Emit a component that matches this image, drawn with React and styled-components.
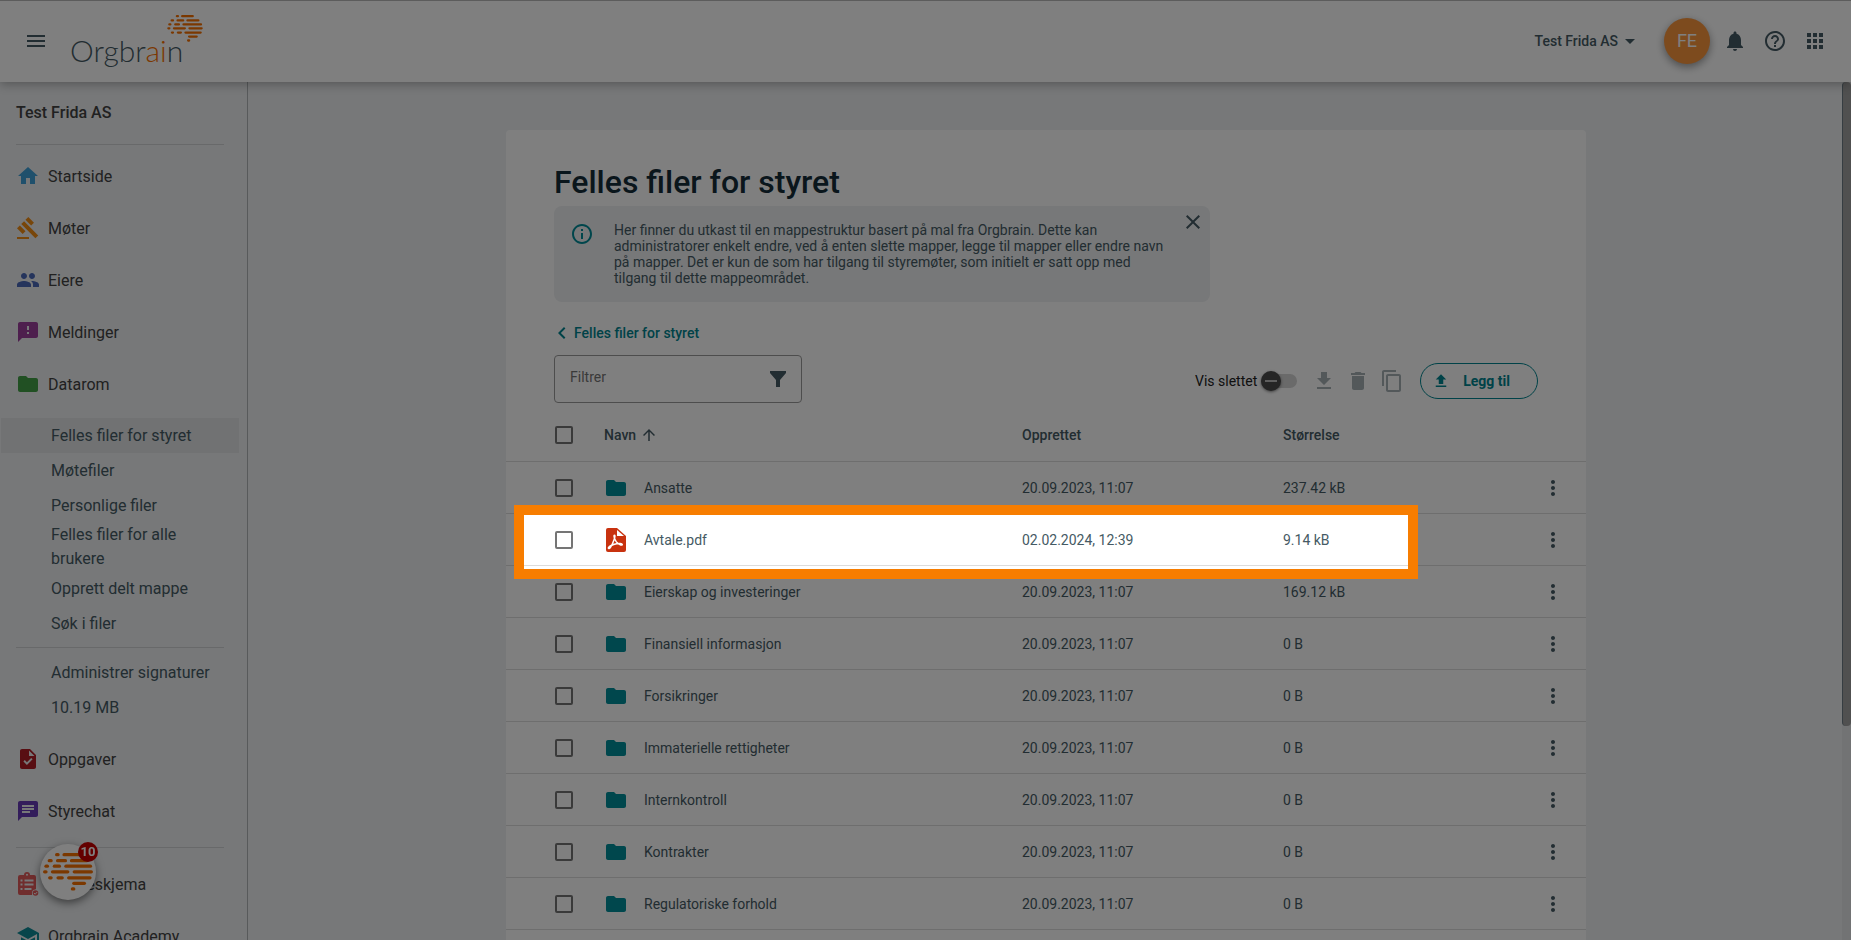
import React from 'react'
import styled, { createGlobalStyle } from 'styled-components'
import {
    MdMenu, MdHome, MdGavel, MdPeople, MdFeedback, MdFolder, MdTask, MdChat, MdSchool,
    MdNotifications, MdHelpOutline, MdApps, MdArrowDropDown, MdInfoOutline, MdClose,
    MdChevronLeft, MdFileDownload, MdFileUpload, MdDelete, MdContentCopy, MdArrowUpward, MdMoreVert
} from 'react-icons/md'

const GlobalStyle = createGlobalStyle`
    *, *::before, *::after {
        box-sizing: border-box;
    }
    body {
        margin: 0;
        overflow: hidden;
        font-family: Roboto, "Liberation Sans", sans-serif;
        font-size: 14px;
        color: #455a64;
        background: #eef0f2;
    }
    a {
        color: inherit;
        text-decoration: none;
    }
    button {
        font: inherit;
        cursor: pointer;
    }
`

const Page = styled.div`
    display: flex;
    flex-direction: column;
    height: 100vh;
    overflow: hidden;
`

const Header = styled.header`
    position: relative;
    z-index: 2;
    display: flex;
    align-items: center;
    flex-shrink: 0;
    height: 82px;
    padding: 0 24px 2px;
    background: #fff;
    border-top: 1px solid #b8b8b8;
    box-shadow: 0 2px 10px rgba(0, 0, 0, .3);
`

const IconButton = styled.button`
    display: flex;
    padding: 0;
    border: none;
    background: none;
    color: ${ p => p.$color || '#455a64' };
`

const LogoLink = styled.a`
    display: flex;
    margin-left: 20px;
`

const HeaderActions = styled.div`
    display: flex;
    align-items: center;
    gap: 16px;
    margin-left: auto;
`

const CompanyButton = styled.button`
    display: flex;
    align-items: center;
    padding: 0;
    margin-right: 6px;
    border: none;
    background: none;
    color: #455a64;
    font-weight: 500;
`

const Avatar = styled.button`
    width: 46px;
    height: 46px;
    margin-right: -3px;
    padding: 0;
    border: none;
    border-radius: 50%;
    background: #fb963c;
    color: #fff;
    font-size: 18px;
    box-shadow: 0 3px 8px rgba(0, 0, 0, .4);
`

const Body = styled.div`
    display: flex;
    flex: 1;
    min-height: 0;
`

const Sidebar = styled.nav`
    flex: 0 0 248px;
    border-right: 1px solid #b0b4b7;
    color: #424242;
    font-size: 16px;
`

const Company = styled.div`
    padding: 19px 16px;
    line-height: 24px;
    font-weight: 500;
`

const Divider = styled.hr`
    height: 1px;
    margin: 0 23px 0 16px;
    border: none;
    background: #d0d3d5;
`

const NavGroup = styled.div`
    padding: ${ p => p.$padding };
`

const NavItem = styled.a`
    display: flex;
    align-items: center;
    gap: 8px;
    height: 52px;
    padding: 0 16px;

    svg {
        color: ${ p => p.$color };
    }
`

const SubList = styled.div`
    padding: ${ p => p.$padding };
    color: #455a64;
`

const SubItem = styled.a`
    display: flex;
    align-items: center;
    min-height: 35px;
    padding: 0 24px 0 50px;
    line-height: 24px;
    background: ${ p => p.$active ? '#e2e4e6' : 'none' };
`

const Chat = styled.button`
    position: fixed;
    left: 40px;
    bottom: 40px;
    display: flex;
    align-items: center;
    justify-content: center;
    width: 56px;
    height: 56px;
    padding: 0;
    border: none;
    border-radius: 50%;
    background: #fff;
    box-shadow: 0 3px 8px rgba(0, 0, 0, .5);
`

const Badge = styled.span`
    position: absolute;
    top: -2px;
    right: -2px;
    width: 20px;
    height: 20px;
    border-radius: 50%;
    background: #c80000;
    color: #fff;
    font-size: 13px;
    font-weight: 700;
    line-height: 20px;
    text-align: center;
`

const Main = styled.main`
    display: flex;
    flex: 1;
    justify-content: center;
    min-width: 0;
    padding: 48px 24px 0 26px;
`

const Card = styled.section`
    flex: 0 1 1080px;
    min-width: 0;
    padding-top: 32px;
    background: #fff;
    border-radius: 4px 4px 0 0;
`

const CardTop = styled.div`
    padding: 0 48px;
`

const Title = styled.h1`
    margin: 0 0 4px;
    color: #142c38;
    font-size: 32px;
    font-weight: 500;
    line-height: 40px;
`

const Info = styled.div`
    display: flex;
    align-items: flex-start;
    max-width: 656px;
    padding: 4px 5px 16px 16px;
    border-radius: 8px;
    background: #eef0f2;

    p {
        flex: 1;
        margin: 12px 12px 0 20px;
        line-height: 16px;
    }
    > svg {
        margin-top: 12px;
        color: #008c98;
    }
`

const Back = styled.a`
    display: flex;
    align-items: center;
    width: max-content;
    margin: 19px 0 0 -4px;
    color: #008590;
    font-weight: 500;
    line-height: 24px;
`

const Toolbar = styled.div`
    display: flex;
    align-items: center;
    justify-content: space-between;
    margin-top: 10px;
`

const FilterBox = styled.label`
    display: flex;
    align-items: center;
    width: 248px;
    height: 48px;
    padding: 0 14px 0 15px;
    border: 1px solid #9a9a9a;
    border-radius: 4px;

    input {
        flex: 1;
        min-width: 0;
        padding: 0 0 4px;
        border: none;
        outline: none;
        background: none;
        font: inherit;
    }
    input::placeholder {
        color: #757575;
    }
`

const Tools = styled.div`
    display: flex;
    align-items: center;
    gap: 10px;
    padding-top: 4px;
`

const ToggleLabel = styled.label`
    display: flex;
    align-items: center;
    gap: 4px;
    margin-right: 5px;
    color: #212121;
`

const Toggle = styled.input`
    appearance: none;
    display: flex;
    align-items: center;
    width: 36px;
    height: 14px;
    margin: 0;
    border-radius: 7px;
    background: #d4d4d4;

    &::before {
        content: '';
        width: 20px;
        height: 20px;
        flex-shrink: 0;
        border-radius: 50%;
        background: linear-gradient(#bdbdbd, #bdbdbd) center / 12px 2px no-repeat #4a4a4a;
        box-shadow: 0 1px 3px rgba(0, 0, 0, .5);
    }
`

const AddButton = styled.button`
    display: flex;
    align-items: center;
    gap: 13px;
    height: 36px;
    margin-left: 6px;
    padding: 0 27px 0 11px;
    border: 1px solid #008590;
    border-radius: 18px;
    background: none;
    color: #008590;
    font-weight: 700;
`

const Table = styled.table`
    width: 100%;
    border-collapse: collapse;
    table-layout: fixed;
    margin-top: 6px;

    th, td {
        height: 52px;
        padding: 0;
        border-bottom: 1px solid #dcdcdc;
        text-align: left;
        white-space: nowrap;
    }
    td {
        padding-top: 1px;
    }
    tr {
        position: relative;
    }
    th {
        font-weight: 500;
    }
`

const Column = styled.col`
    width: ${ p => p.$width || 'auto' };
`

const Checkbox = styled.input`
    appearance: none;
    display: block;
    width: 18px;
    height: 18px;
    margin: 0 0 0 49px;
    border: 2px solid #757575;
    border-radius: 2px;
`

const SortButton = styled.button`
    display: flex;
    align-items: center;
    gap: 4px;
    padding: 0;
    border: none;
    background: none;
    color: inherit;
`

const FileName = styled.div`
    display: flex;
    align-items: center;
    gap: 16px;

    svg {
        color: #008e9a;
    }
`

const Spotlight = styled.div`
    position: absolute;
    z-index: 10;
    top: -8px;
    bottom: -14px;
    left: 8px;
    right: 168px;
    border: 10px solid #f77d00;
    outline: 9999px solid rgba(0, 0, 0, .5);
    pointer-events: none;
`

const ScrollTrack = styled.div`
    flex: 0 0 9px;
    background: #e4e6e8;
`

const ScrollThumb = styled.div`
    height: 75%;
    border-left: 1px solid #6d7b84;
    border-radius: 4px;
    background: #a0a0a0;
`

const brainRows = [
    [ 48, [ 527, 537 ], [ 543, 582 ] ],
    [ 61, [ 511, 522 ], [ 529, 553 ], [ 559, 599 ] ],
    [ 73, [ 504, 514 ], [ 522, 540 ], [ 547, 607 ] ],
    [ 85, [ 501, 511 ], [ 518, 558 ], [ 565, 609 ] ],
    [ 98, [ 512, 522 ], [ 530, 546 ], [ 553, 606 ] ],
    [ 110, [ 564, 594 ] ],
    [ 122, [ 561, 571 ] ]
]

const Brain = ( props ) => (
    <svg viewBox="501 44 108 82" aria-hidden="true" {...props}>
        {brainRows.map( ( [ y, ...parts ] ) => parts.map( ( [ from, to ] ) => (
            <rect key={`${ y }-${ from }`} x={from} y={y - 4} width={to - from} height="7" rx="3.5" fill="#f77000" />
        ) ) )}
    </svg>
)

const Logo = () => (
    <svg width="136" height="60" viewBox="0 0 136 60">
        <text x="2" y="51" fontFamily="Lato, sans-serif" fontWeight="300" fontSize="30" fill="#455a64">
            Orgbr<tspan fill="#f77000">ai</tspan>n
        </text>
        <Brain x="99" y="4" width="36" height="27" />
    </svg>
)

const FilterIcon = () => (
    <svg width="18" height="18" viewBox="0 0 18 18" fill="#455a64">
        <path d="M1 1h16v2l-6 7v7H7v-7L1 3z" />
    </svg>
)

const PdfIcon = () => (
    <svg width="24" height="24" viewBox="0 0 24 24">
        <path fill="#c8320f" d="M4 0h9l9 8v14a2 2 0 0 1-2 2H4a2 2 0 0 1-2-2V2a2 2 0 0 1 2-2z" />
        <path fill="#fff" d="M13 2v6h7z" />
        <path
            d="M10.5 7.200c-1.500 0 .8 8.300 6.200 9.800 2.300.6 2.100-1.800-.8-1.600-4.200.2-8.500 1.500-10.700 3.300-1.900 1.700-.2 2.700 1.300.6 2.300-3.200 5.600-12.100 4-12.100z"
            fill="none" stroke="#fff" strokeWidth="1.500"
        />
    </svg>
)

const FormIcon = () => (
    <svg width="24" height="24" viewBox="0 0 24 24">
        <path fill="currentColor" fillRule="evenodd" d="M4 3h4a3 3 0 0 1 6 0h4a2 2 0 0 1 2 2v12l-4 4v2H4a2 2 0 0 1-2-2V5a2 2 0 0 1 2-2zm7-1.200a1 1 0 1 0 0 2 1 1 0 0 0 0-2zM4.500 7.500v2h2v-2zm4 0v2h9v-2zm-4 4v2h2v-2zm4 0v2h9v-2zm-4 4.500v2h2v-2zm4 0v2h7v-2z" />
        <circle cx="19.500" cy="21" r="3.500" fill="#eef0f2" />
        <circle cx="19.500" cy="21" r="2.800" fill="currentColor" />
        <path d="M18 21l1.200 1.200 2-2.200" fill="none" stroke="#eef0f2" />
    </svg>
)

const mainLinks = [
    { label: 'Startside', icon: MdHome, color: '#3fa0d8' },
    { label: 'Møter', icon: MdGavel, color: '#f08c14' },
    { label: 'Eiere', icon: MdPeople, color: '#4a68b8' },
    { label: 'Meldinger', icon: MdFeedback, color: '#9c3f9c' },
    { label: 'Datarom', icon: MdFolder, color: '#43a047' }
]

const fileLinks = [
    'Felles filer for styret', 'Møtefiler', 'Personlige filer',
    'Felles filer for alle brukere', 'Opprett delt mappe', 'Søk i filer'
]

const files = [
    { name: 'Ansatte', created: '20.09.2023, 11:07', size: '237.42 kB' },
    { name: 'Avtale.pdf', created: '02.02.2024, 12:39', size: '9.14 kB', pdf: true },
    { name: 'Eierskap og investeringer', created: '20.09.2023, 11:07', size: '169.12 kB' },
    { name: 'Finansiell informasjon', created: '20.09.2023, 11:07', size: '0 B' },
    { name: 'Forsikringer', created: '20.09.2023, 11:07', size: '0 B' },
    { name: 'Immaterielle rettigheter', created: '20.09.2023, 11:07', size: '0 B' },
    { name: 'Internkontroll', created: '20.09.2023, 11:07', size: '0 B' },
    { name: 'Kontrakter', created: '20.09.2023, 11:07', size: '0 B' },
    { name: 'Regulatoriske forhold', created: '20.09.2023, 11:07', size: '0 B' }
]

const NavLink = ( { label, icon: Icon, color } ) => (
    <NavItem href="#" $color={color}><Icon size={24} />{label}</NavItem>
)

const SidebarLinks = () => (
    <>
        <NavGroup $padding="5px 0 0">
            {mainLinks.map( link => <NavLink key={link.label} {...link} /> )}
        </NavGroup>
        <SubList $padding="8px 8px 6px 1px">
            {fileLinks.map( ( label, i ) => <SubItem key={label} href="#" $active={i === 0}>{label}</SubItem> )}
        </SubList>
        <Divider />
        <SubList $padding="7px 8px 8px 1px">
            <SubItem href="#">Administrer signaturer</SubItem>
            <SubItem as="div">10.19 MB</SubItem>
        </SubList>
        <NavGroup $padding="0 0 10px">
            <NavLink label="Oppgaver" icon={MdTask} color="#b01c24" />
            <NavLink label="Styrechat" icon={MdChat} color="#673ab7" />
        </NavGroup>
        <Divider />
        <NavGroup $padding="10px 0 0">
            <NavLink label="Spørreskjema" icon={FormIcon} color="#e05a5a" />
            <NavLink label="Orgbrain Academy" icon={MdSchool} color="#0f8a96" />
        </NavGroup>
    </>
)

const FileTable = () => (
    <Table>
        <colgroup>
            <Column $width="98px" />
            <Column />
            <Column $width="261px" />
            <Column $width="258px" />
            <Column $width="45px" />
        </colgroup>
        <thead>
            <tr>
                <th><Checkbox type="checkbox" aria-label="Velg alle" /></th>
                <th><SortButton>Navn<MdArrowUpward size={18} /></SortButton></th>
                <th>Opprettet</th>
                <th>Størrelse</th>
                <th></th>
            </tr>
        </thead>
        <tbody>
            {files.map( file => (
                <tr key={file.name}>
                    <td>
                        <Checkbox type="checkbox" aria-label={`Velg ${ file.name }`} />
                        {file.pdf && <Spotlight />}
                    </td>
                    <td><FileName>{file.pdf ? <PdfIcon /> : <MdFolder size={24} />}{file.name}</FileName></td>
                    <td>{file.created}</td>
                    <td>{file.size}</td>
                    <td><IconButton aria-label="Flere valg"><MdMoreVert size={24} /></IconButton></td>
                </tr>
            ) )}
        </tbody>
    </Table>
)

const App = () =>
{
    return (
        <>
            <GlobalStyle />
            <Page>
                <Header>
                    <IconButton aria-label="Meny"><MdMenu size={24} /></IconButton>
                    <LogoLink href="#" aria-label="Orgbrain"><Logo /></LogoLink>
                    <HeaderActions>
                        <CompanyButton>Test Frida AS<MdArrowDropDown size={24} /></CompanyButton>
                        <Avatar>FE</Avatar>
                        <IconButton aria-label="Varsler"><MdNotifications size={24} /></IconButton>
                        <IconButton aria-label="Hjelp"><MdHelpOutline size={24} /></IconButton>
                        <IconButton aria-label="Apper"><MdApps size={24} /></IconButton>
                    </HeaderActions>
                </Header>

                <Body>
                    <Sidebar>
                        <Company>Test Frida AS</Company>
                        <Divider />
                        <SidebarLinks />
                    </Sidebar>

                    <Main>
                        <Card>
                            <CardTop>
                                <Title>Felles filer for styret</Title>
                                <Info>
                                    <MdInfoOutline size={24} />
                                    <p>
                                        Her finner du utkast til en mappestruktur basert på mal fra Orgbrain. Dette kan
                                        administratorer enkelt endre, ved å enten slette mapper, legge til mapper eller endre navn
                                        på mapper. Det er kun de som har tilgang til styremøter, som initielt er satt opp med
                                        tilgang til dette mappeområdet.
                                    </p>
                                    <IconButton aria-label="Lukk"><MdClose size={24} /></IconButton>
                                </Info>
                                <Back href="#"><MdChevronLeft size={24} />Felles filer for styret</Back>
                                <Toolbar>
                                    <FilterBox>
                                        <input type="text" placeholder="Filtrer" aria-label="Filtrer" />
                                        <FilterIcon />
                                    </FilterBox>
                                    <Tools>
                                        <ToggleLabel>Vis slettet<Toggle type="checkbox" role="switch" /></ToggleLabel>
                                        <IconButton $color="#a6b0b5" aria-label="Last ned"><MdFileDownload size={24} /></IconButton>
                                        <IconButton $color="#a6b0b5" aria-label="Slett"><MdDelete size={24} /></IconButton>
                                        <IconButton $color="#a6b0b5" aria-label="Kopier"><MdContentCopy size={24} /></IconButton>
                                        <AddButton><MdFileUpload size={18} />Legg til</AddButton>
                                    </Tools>
                                </Toolbar>
                            </CardTop>
                            <FileTable />
                        </Card>
                    </Main>
                    <ScrollTrack><ScrollThumb /></ScrollTrack>
                </Body>

                <Chat aria-label="Chat">
                    <Brain width="50" height="38" />
                    <Badge>10</Badge>
                </Chat>
            </Page>
        </>
    )
}

export default App
